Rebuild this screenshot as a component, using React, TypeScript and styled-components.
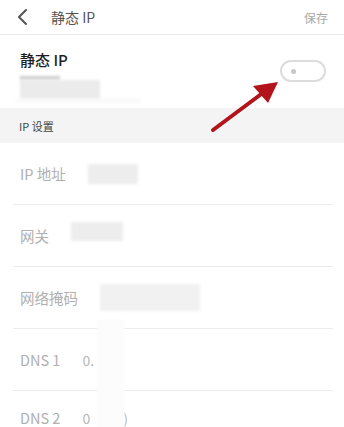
import React from "react";
import styled, { createGlobalStyle } from "styled-components";

const Global = createGlobalStyle`
  html, body { margin: 0; padding: 0; background: #fff; }
  body { font-family: "Noto Sans CJK SC", "Noto Sans", sans-serif; }
`;

const Page = styled.div`
  position: relative;
  width: 344px;
  height: 427px;
  overflow: hidden;
  background: #fff;
`;

const Header = styled.div`
  height: 35px;
  box-sizing: border-box;
  border-bottom: 1px solid #ebebeb;
  display: flex;
  align-items: center;
  padding: 0 16px 0 16px;
`;

const Back = styled.svg`
  width: 14px;
  height: 16px;
  margin-right: 21px;
`;

const Title = styled.div`
  flex: 1;
  font-size: 14px;
  color: #555;
  margin-top: -1px;
`;

const Save = styled.div`
  font-size: 12px;
  color: #a8a8a8;
`;

const SwitchRow = styled.div`
  height: 73px;
  box-sizing: border-box;
  display: flex;
  justify-content: space-between;
  padding: 14px 18px 0 20px;
`;

const SwitchText = styled.div`
  display: flex;
  flex-direction: column;
`;

const SwitchTitle = styled.div`
  font-size: 15px;
  color: #1e1e1e;
  line-height: 22px;
  font-weight: 500;
`;

const Blur = styled.div<{ $w: number; $h: number; $c: string; $mt?: number; $ml?: number }>`
  width: ${(p) => p.$w}px;
  height: ${(p) => p.$h}px;
  background: ${(p) => p.$c};
  margin-top: ${(p) => p.$mt ?? 0}px;
  margin-left: ${(p) => p.$ml ?? 0}px;
  filter: blur(1.5px);
`;

const Toggle = styled.div`
  width: 46px;
  height: 22px;
  box-sizing: border-box;
  border: 2px solid #dcdcdc;
  border-radius: 12px;
  margin-top: 11px;
  display: flex;
  align-items: center;
  padding-left: 9px;
`;

const Dot = styled.div`
  width: 5px;
  height: 5px;
  border-radius: 50%;
  background: #c8c8c8;
`;

const Section = styled.div`
  height: 35px;
  background: #f4f4f4;
  display: flex;
  align-items: center;
  padding-left: 19px;
  font-size: 11px;
  color: #444;
`;

const Row = styled.div<{ $last?: boolean }>`
  height: ${(p) => (p.$last ? 54 : 62)}px;
  box-sizing: border-box;
  margin: 0 11px 0 13px;
  padding-left: 7px;
  border-bottom: ${(p) => (p.$last ? "none" : "1px solid #ececec")};
  display: flex;
  align-items: center;
  gap: 22px;
`;

const Label = styled.div`
  font-size: 14.5px;
  line-height: 20px;
  color: #b0b0b0;
`;

const Value = styled.div`
  font-size: 14px;
  line-height: 20px;
  color: #b8b8b8;
  display: flex;
  align-items: center;
`;

const Paren = styled.span`
  margin-left: 33px;
`;

const Overlay = styled.svg`
  position: absolute;
  left: 0;
  top: 0;
  pointer-events: none;
`;

const Mask = styled.div`
  position: absolute;
  left: 97px;
  top: 320px;
  width: 27px;
  height: 110px;
  background: #fcfcfc;
  filter: blur(1px);
`;

export default function App() {
  return (
    <Page>
      <Global />
      <Header>
        <Back viewBox="0 0 14 16">
          <path d="M10 1 L3 8 L10 15" fill="none" stroke="#555" strokeWidth="2" strokeLinecap="round" strokeLinejoin="round" />
        </Back>
        <Title>静态 IP</Title>
        <Save>保存</Save>
      </Header>
      <SwitchRow>
        <SwitchText>
          <SwitchTitle>静态 IP</SwitchTitle>
          <Blur $w={40} $h={4} $c="#cfcfcf" $mt={5} />
          <Blur $w={80} $h={19} $c="#ebebeb" />
          <Blur $w={125} $h={3} $c="#f6f6f6" $ml={-4} />
        </SwitchText>
        <Toggle>
          <Dot />
        </Toggle>
      </SwitchRow>
      <Section>IP 设置</Section>
      <Row>
        <Label>IP 地址</Label>
        <Blur $w={50} $h={20} $c="#ededed" />
      </Row>
      <Row>
        <Label>网关</Label>
        <Blur $w={52} $h={19} $c="#ededed" $mt={-8} />
      </Row>
      <Row>
        <Label>网络掩码</Label>
        <Blur $w={100} $h={27} $c="#f1f1f1" />
      </Row>
      <Row>
        <Label>DNS 1</Label>
        <Value>0.</Value>
      </Row>
      <Row $last>
        <Label>DNS 2</Label>
        <Value>
          0<Paren>)</Paren>
        </Value>
      </Row>
      <Mask />
      <Overlay width="344" height="427" viewBox="0 0 344 427">
        <line x1="213" y1="130" x2="268" y2="89" stroke="#b3141c" strokeWidth="4" strokeLinecap="round" />
        <polygon points="278,82 253,86 268,103" fill="#b3141c" />
      </Overlay>
    </Page>
  );
}
